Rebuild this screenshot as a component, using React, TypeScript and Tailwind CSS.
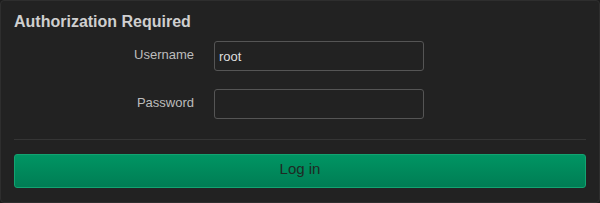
import React from "react";

const font = { fontFamily: '"Liberation Sans", Arial, sans-serif' };

function Field({ label, value, type }: { label: string; value?: string; type: string }) {
  return (
    <div className="flex items-center h-[30px]">
      <label className="w-[180px] pb-[2px] text-right text-[13px] text-[#bdbdbd]">{label}</label>
      <input
        type={type}
        defaultValue={value}
        className="ml-[20px] w-[210px] h-[30px] rounded-[3px] border border-[#555] bg-[#222] px-[4px] text-[13px] text-[#dedede] outline-none"
        style={font}
      />
    </div>
  );
}

export default function App() {
  return (
    <div className="w-[600px] h-[203px] bg-[#1c1c1c]" style={font}>
      <div className="h-[203px] rounded-[4px] border border-[#2e2e2e] bg-[#222] px-[13px]">
        {/* header */}
        <h2 className="mt-[11px] text-[16px] leading-[20px] font-bold text-[#cfcfcf]">
          Authorization Required
        </h2>

        <div className="mt-[9px] flex flex-col gap-[18px]">
          <Field label="Username" value="root" type="text" />
          <Field label="Password" type="password" />
        </div>

        <div className="mt-[20px] h-px bg-[#353535]" />

        <button className="mt-[14px] w-full h-[34px] pb-[3px] rounded-[3px] border border-[#13a371] bg-gradient-to-b from-[#009563] to-[#007d54] text-[15px] text-[#1f2a24]">
          Log in
        </button>
      </div>
    </div>
  );
}
